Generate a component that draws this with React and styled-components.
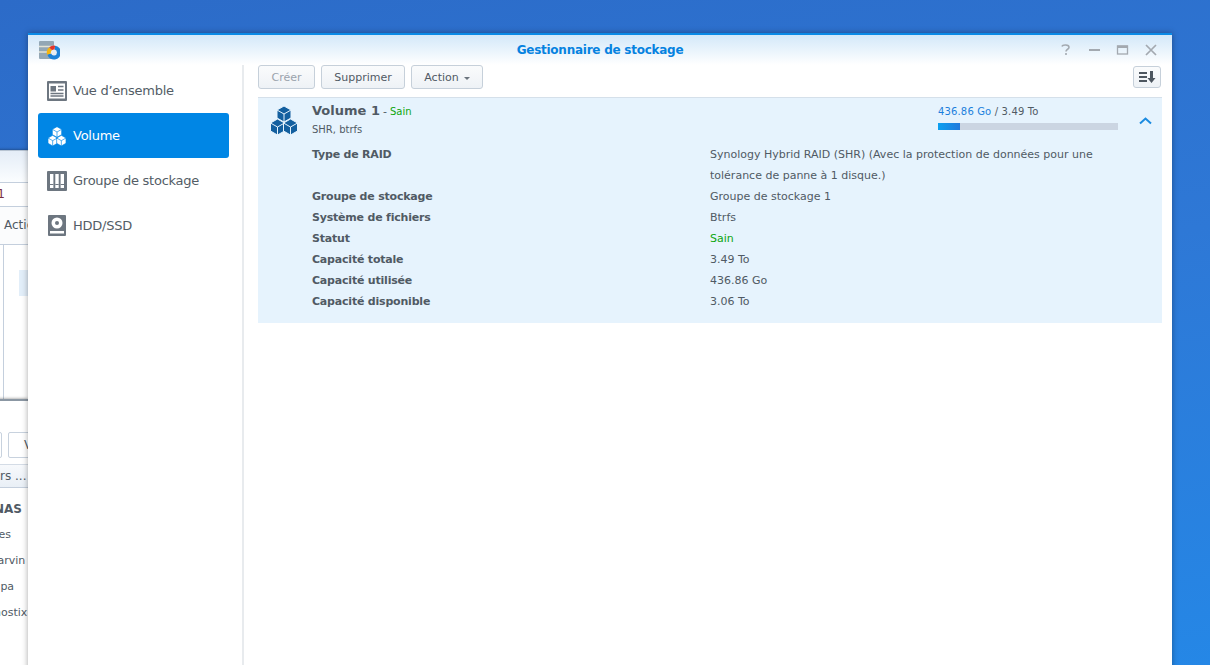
import React from 'react';
import styled, { createGlobalStyle } from 'styled-components';

const Global = createGlobalStyle`
  html, body { margin: 0; padding: 0; height: 100%; overflow: hidden; }
  body { font-family: "DejaVu Sans", Verdana, sans-serif; }
  #root { height: 100%; }
`;

const Desktop = styled.div`
  position: relative;
  width: 1210px;
  height: 665px;
  overflow: hidden;
  background: linear-gradient(170deg, #2c6bc8 0%, #2e78d6 50%, #2587e6 100%);
`;

const BackWindow = styled.div`
  position: absolute;
  left: -100px;
  width: 128px;
  top: ${p => p.$top}px;
  height: ${p => p.$height}px;
  background: #fff;
  box-shadow: 0 0 3px rgba(0,0,0,.5);
  border-top: ${p => p.$dark ? '2px solid #8b97a3' : '1px solid #b8c4d2'};
  overflow: hidden;
  color: #505a64;
  font-size: 12px;
`;

const BackHeader = styled.div`
  height: 31px;
  background: linear-gradient(#e4edf7, #fbfdff);
`;

const BackField = styled.div`
  height: 23px;
  border-top: 1px solid #c4cfdd;
  border-bottom: 1px solid #c4cfdd;
  line-height: 23px;
  color: #7b3040;
`;

const BackFieldText = styled.span`
  display: block;
  width: 105px;
  text-align: right;
`;

const BackTools = styled.div`
  height: 37px;
  line-height: 37px;
  padding-left: 104px;
  border-bottom: 1px solid #c4cfdd;
  white-space: nowrap;
  color: #505a64;
  background: #fbfcfd;
`;

const BackGrid = styled.div`
  height: 154px;
  margin-left: 103px;
  padding-top: 25px;
  padding-left: 15px;
  box-sizing: border-box;
  border-left: 1px solid #c4cfdd;
`;

const BackSelected = styled.div`
  width: 9px;
  height: 26px;
  background: #e2eef9;
`;

const BackSpacer = styled.div`height: ${p => p.$h}px;`;

const BackButtons = styled.div`
  display: flex;
  gap: 6px;
  margin-left: 79px;
  height: 26px;
`;

const BackButton = styled.div`
  flex: none;
  width: ${p => p.$w}px;
  height: 24px;
  border: 1px solid #c8d2de;
  border-radius: 2px;
  text-align: center;
  line-height: 24px;
  font-size: 12px;
  color: #505a64;
  white-space: nowrap;
`;

const BackTab = styled.div`
  height: 22px;
  margin-top: 6px;
  padding-left: 100px;
  background: linear-gradient(#f7f9fc, #e9eff6);
  border-top: 1px solid #d4dce6;
  border-bottom: 1px solid #c4cfdd;
  line-height: 22px;
  white-space: nowrap;
  font-size: 12px;
`;

const BackList = styled.div`
  padding: 8px 0 0 100px;
  white-space: nowrap;
`;

const BackItem = styled.div`
  height: 26px;
  line-height: 26px;
  font-size: ${p => p.$bold ? 12 : 11}px;
  margin-left: ${p => p.$o || 0}px;
  font-weight: ${p => p.$bold ? 700 : 400};
`;

const Window = styled.div`
  position: absolute;
  left: 28px;
  top: 33px;
  width: 1144px;
  height: 640px;
  background: #fff;
  border-top: 2px solid #0a8ae6;
  box-shadow: 0 0 6px rgba(0,0,0,.35);
  display: flex;
  flex-direction: column;
`;

const TitleBar = styled.div`
  flex: none;
  height: 30px;
  display: flex;
  align-items: center;
  position: relative;
  background: linear-gradient(#d3e8f9, #ffffff);
`;

const AppIcon = styled.svg`
  margin-left: 10px;
  flex: none;
`;

const Title = styled.div`
  position: absolute;
  left: 0;
  right: 0;
  top: 7px;
  text-align: center;
  font-size: 12px;
  line-height: 16px;
  font-weight: 700;
  letter-spacing: -0.25px;
  color: #0682e0;
`;

const WinControls = styled.div`
  margin-left: auto;
  margin-right: 14px;
  margin-top: -1px;
  display: flex;
  gap: 15px;
  align-items: center;
  color: #a3a9b0;
`;

const Body = styled.div`
  flex: 1;
  display: flex;
  min-height: 0;
`;

const Sidebar = styled.nav`
  flex: none;
  width: 216px;
  padding: 3px 13px 0 10px;
  box-sizing: border-box;
  border-right: 2px solid #e8ebee;
  display: flex;
  flex-direction: column;
`;

const NavItem = styled.div`
  height: 45px;
  box-sizing: border-box;
  display: flex;
  align-items: center;
  padding-left: 9px;
  gap: 6px;
  border-radius: 3px;
  font-size: 13px;
  letter-spacing: -0.25px;
  background: ${p => p.$active ? '#0086e5' : 'transparent'};
  color: ${p => p.$active ? '#fff' : '#535d66'};
`;

const Main = styled.main`
  flex: 1;
  padding: 0 10px 0 14px;
  min-width: 0;
`;

const Toolbar = styled.div`
  height: 32px;
  display: flex;
  gap: 6px;
  align-items: flex-start;
`;

const Button = styled.button`
  height: 24px;
  width: ${p => p.$w}px;
  padding: 1px 0 0;
  box-sizing: border-box;
  border: 1px solid #c6d0da;
  border-radius: 3px;
  background: linear-gradient(#fafbfc, #eef2f6);
  font-family: inherit;
  font-size: 11px;
  color: ${p => p.$disabled ? '#9aa3ac' : '#505a64'};
  display: flex;
  align-items: center;
  justify-content: center;
  gap: 5px;
`;

const Caret = styled.span`
  width: 0;
  height: 0;
  border-left: 3px solid transparent;
  border-right: 3px solid transparent;
  border-top: 3px solid #6b747d;
  margin-top: 2px;
`;

const SortButton = styled(Button)`
  margin-left: auto;
  margin-top: 1px;
  height: 22px;
  margin-right: 1px;
  padding: 0;
`;

const Panel = styled.section`
  background: #e6f3fd;
  border-top: 1px solid #d5e0ea;
  height: 226px;
  box-sizing: border-box;
`;

const PanelHead = styled.div`
  display: flex;
  height: 46px;
  padding-left: 11px;
`;

const VolumeIcon = styled.div`
  flex: none;
  margin-top: 7px;
`;

const HeadText = styled.div`
  margin-left: 13px;
  padding-top: 5px;
  color: #505a64;
`;

const VolumeName = styled.div`
  font-size: 13px;
  line-height: 16px;
  font-weight: 700;
  display: flex;
  align-items: baseline;
`;

const Dash = styled.span`
  font-size: 11px;
  font-weight: 400;
  margin-left: 3px;
`;

const Healthy = styled.span`
  font-size: 10px;
  font-weight: 400;
  color: #0da60d;
  margin-left: 3px;
`;

const SubLine = styled.div`
  font-size: 10px;
  line-height: 14px;
  margin-top: 3px;
`;

const Usage = styled.div`
  margin-left: auto;
  width: 180px;
  padding-top: 7px;
  font-size: 10px;
  line-height: 13px;
  letter-spacing: 0.15px;
  color: #505a64;
`;

const UsedText = styled.span`
  color: #1c7fdc;
`;

const Bar = styled.div`
  height: 7px;
  margin-top: 5px;
  background: #cbd5e2;
`;

const BarFill = styled.div`
  height: 100%;
  background: linear-gradient(90deg, #0ba0f0, #2179dc);
`;

const Chevron = styled.svg`
  flex: none;
  margin: 18px 9px 0 20px;
`;

const Rows = styled.div`
  padding-left: 54px;
`;

const Row = styled.div`
  display: grid;
  grid-template-columns: 398px 400px;
  font-size: 11px;
  line-height: 21px;
  color: #505a64;
`;

const RowLabel = styled.div`
  font-weight: 700;
  letter-spacing: -0.2px;
`;

const RowValue = styled.div`
  color: ${p => p.$ok ? '#0da60d' : '#505a64'};
`;

const data = [
  ['Groupe de stockage', 'Groupe de stockage 1'],
  ['Système de fichiers', 'Btrfs'],
  ['Statut', 'Sain', true],
  ['Capacité totale', '3.49 To'],
  ['Capacité utilisée', '436.86 Go'],
  ['Capacité disponible', '3.06 To'],
];

const Cubes = ({ fill, line, size }) => (
  <svg width={size} height={size} viewBox="0 0 30 30">
    <g fill={fill} stroke={line} strokeWidth="1" strokeLinejoin="round">
      <path d="M15 1l7 4v8l-7 4-7-4V5z" />
      <path d="M8.5 14l7 4v8l-7 4-7-4v-8z" />
      <path d="M21.5 14l7 4v8l-7 4-7-4v-8z" />
    </g>
    <g fill="none" stroke={line} strokeWidth="1">
      <path d="M8 5l7 4 7-4M15 9v8M1.5 18l7 4 7-4M8.5 22v8M14.5 18l7 4 7-4M21.5 22v8" />
    </g>
  </svg>
);

export default function App() {
  return (
    <Desktop>
      <Global />
      <BackWindow $top={150} $height={250}>
        <BackHeader />
        <BackField><BackFieldText>1</BackFieldText></BackField>
        <BackTools>Action</BackTools>
        <BackGrid>
          <BackSelected />
        </BackGrid>
      </BackWindow>
      <BackWindow $top={399} $height={270} $dark>
        <BackSpacer $h={31} />
        <BackButtons>
          <BackButton $w={21} />
          <BackButton $w={38}>V</BackButton>
        </BackButtons>
        <BackTab>rs ...</BackTab>
        <BackList>
          <BackItem $bold $o={-6}>NAS</BackItem>
          <BackItem $o={-1.5}>es</BackItem>
          <BackItem $o={-2.6}>arvin</BackItem>
          <BackItem $o={-6.6}>upa</BackItem>
          <BackItem $o={-6}>nostix</BackItem>
        </BackList>
      </BackWindow>

      <Window>
        <TitleBar>
          <AppIcon width="22" height="22" viewBox="0 0 22 22">
            <rect x="1" y="2" width="15" height="18" rx="1" fill="#93a7b5" />
            <path d="M1 7.5h15M1 13h15" stroke="#e3e3d6" strokeWidth="1.6" />
            <circle cx="16" cy="13.5" r="5" fill="#e8eef3" />
            <path d="M16.8 8.6a5 5 0 1 1-5.6 6.4" fill="none" stroke="#1c82d8" strokeWidth="4" />
            <path d="M11 15.2a5 5 0 0 1 1.6-5.4" fill="none" stroke="#f5b50f" strokeWidth="4" />
            <path d="M12.6 9.8a5 5 0 0 1 4.2-1.2" fill="none" stroke="#e5352a" strokeWidth="4" />
          </AppIcon>
          <Title>Gestionnaire de stockage</Title>
          <WinControls>
            <svg width="14" height="14" viewBox="0 0 14 14" fill="none" stroke="#a3a9b0" strokeWidth="1.6">
              <path d="M3 3.5C3.5 1.5 10 1.3 10 4.2 10 6.5 7 6 7 8.6" /><path d="M7 10v2" />
            </svg>
            <svg width="13" height="14" viewBox="0 0 13 14" fill="#a3a9b0"><rect x="1" y="6" width="11" height="2" /></svg>
            <svg width="13" height="14" viewBox="0 0 13 14" fill="none" stroke="#a3a9b0"><rect x="1.5" y="3" width="10" height="8" strokeWidth="1.3" /><rect x="1" y="2.5" width="11" height="2.5" fill="#a3a9b0" stroke="none" /></svg>
            <svg width="14" height="14" viewBox="0 0 14 14" stroke="#a3a9b0" strokeWidth="1.7"><path d="M2 2l10 10M12 2L2 12" /></svg>
          </WinControls>
        </TitleBar>
        <Body>
          <Sidebar>
            <NavItem>
              <svg width="20" height="20" viewBox="0 0 20 20">
                <rect width="20" height="20" rx="1" fill="#6d7680" />
                <rect x="2" y="2.5" width="16" height="15" fill="#fff" />
                <rect x="3.5" y="5" width="5.5" height="5.5" fill="#6d7680" />
                <path d="M11 5.5h5.5M11 9h5.5M3.5 12.5h13M3.5 15h13" stroke="#6d7680" strokeWidth="1.4" />
              </svg>
              Vue d’ensemble
            </NavItem>
            <NavItem $active>
              <Cubes size={20} fill="#fff" line="#0086e5" />
              Volume
            </NavItem>
            <NavItem>
              <svg width="20" height="20" viewBox="0 0 20 20">
                <rect width="20" height="20" rx="1" fill="#6d7680" />
                <rect x="3" y="3" width="3.4" height="14" fill="#fff" />
                <rect x="8.3" y="3" width="3.4" height="14" fill="#fff" />
                <rect x="13.6" y="3" width="3.4" height="14" fill="#fff" />
                <path d="M3 13.5h3.4M8.3 13.5h3.4M13.6 13.5h3.4" stroke="#6d7680" strokeWidth="1.2" />
              </svg>
              Groupe de stockage
            </NavItem>
            <NavItem>
              <svg width="20" height="21" viewBox="0 0 20 21">
                <rect x="1" width="18" height="21" rx="1" fill="#6d7680" />
                <circle cx="10" cy="8" r="5.5" fill="#fff" />
                <circle cx="10" cy="8" r="2" fill="#6d7680" />
                <rect x="3" y="16" width="14" height="2.5" fill="#fff" />
              </svg>
              HDD/SSD
            </NavItem>
          </Sidebar>
          <Main>
            <Toolbar>
              <Button $w={57} $disabled>Créer</Button>
              <Button $w={84}>Supprimer</Button>
              <Button $w={72}>Action <Caret /></Button>
              <SortButton $w={28} aria-label="Trier">
                <svg width="18" height="14" viewBox="0 0 18 14" fill="#4d565f">
                  <rect x="1" y="2" width="8" height="2" /><rect x="1" y="6" width="8" height="2" /><rect x="1" y="10" width="8" height="2" />
                  <path d="M12 1h3v7h2.5l-4 5-4-5H12z" />
                </svg>
              </SortButton>
            </Toolbar>
            <Panel>
              <PanelHead>
                <VolumeIcon><Cubes size={30} fill="#135f9f" line="#e6f3fd" /></VolumeIcon>
                <HeadText>
                  <VolumeName>Volume 1<Dash>-</Dash><Healthy>Sain</Healthy></VolumeName>
                  <SubLine>SHR, btrfs</SubLine>
                </HeadText>
                <Usage>
                  <UsedText>436.86 Go</UsedText> / 3.49 To
                  <Bar><BarFill style={{ width: `${(436.86 / 3573.76) * 100}%` }} /></Bar>
                </Usage>
                <Chevron width="15" height="9" viewBox="0 0 15 9" fill="none" stroke="#1b8be0" strokeWidth="2">
                  <path d="M2 7.5l5.5-5 5.5 5" />
                </Chevron>
              </PanelHead>
              <Rows>
                <Row>
                  <RowLabel>Type de RAID</RowLabel>
                  <RowValue>Synology Hybrid RAID (SHR) (Avec la protection de données pour une tolérance de panne à 1 disque.)</RowValue>
                </Row>
                {data.map(([k, v, ok]) => (
                  <Row key={k}>
                    <RowLabel>{k}</RowLabel>
                    <RowValue $ok={ok}>{v}</RowValue>
                  </Row>
                ))}
              </Rows>
            </Panel>
          </Main>
        </Body>
      </Window>
    </Desktop>
  );
}
